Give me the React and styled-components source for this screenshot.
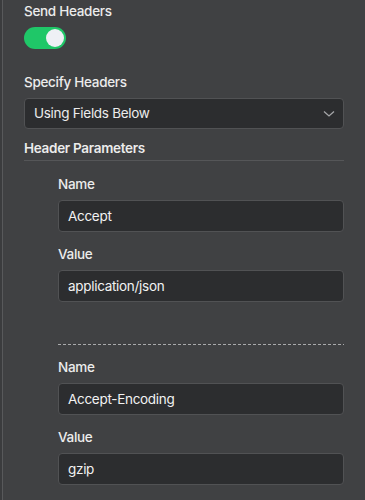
import styled, { createGlobalStyle } from 'styled-components';

const GlobalStyle = createGlobalStyle`
    html, body {
        margin: 0;
        padding: 0;
        background: #3b3c3e;
    }
    * {
        box-sizing: border-box;
    }
`;

const Page = styled.div`
    margin-left: 2px;
    min-height: 500px;
    border-left: 1px solid #58595b;
    background: #404143;
    padding: 3px 21px 0 21px;
    font-family: Inter, "Noto Sans", sans-serif;
    font-size: 13.5px;
    letter-spacing: -0.3px;
    line-height: 17px;
    color: #ececec;
`;

const Label = styled.div`
    font-weight: 500;
    margin-bottom: 7px;
`;

const Section = styled.div`
    margin-bottom: ${(p) => p.$gap || 0}px;
`;

const Toggle = styled.div`
    margin-top: 2px;
    width: 42px;
    height: 22px;
    border-radius: 11px;
    background: #1fc768;
    display: flex;
    align-items: center;
    justify-content: flex-end;
    padding: 0 2px;
`;

const Knob = styled.span`
    width: 18px;
    height: 18px;
    border-radius: 50%;
    background: #eef0f5;
`;

const Select = styled.div`
    height: 31px;
    border: 1px solid #515254;
    border-radius: 4px;
    background: #2c2d2f;
    display: flex;
    align-items: center;
    justify-content: space-between;
    padding: 0 8px 0 9px;
`;

const Heading = styled.div`
    font-weight: 600;
    padding-bottom: 3px;
    border-bottom: 1px solid #555658;
`;

const Params = styled.div`
    padding-left: 34px;
    padding-top: 15px;
`;

const Field = styled.div`
    margin-bottom: ${(p) => p.$gap || 0}px;
`;

const Input = styled.div`
    height: 32px;
    border: 1px solid #515254;
    border-radius: 4px;
    background: #2c2d2f;
    display: flex;
    align-items: center;
    padding: 0 9px;
    color: #f2f2f2;
`;

const Divider = styled.div`
    height: 1px;
    background: repeating-linear-gradient(to right, #a9aaac 0 3px, transparent 3px 5px);
    margin: 42px 0 14px;
`;

const Chevron = () => (
    <svg width="12" height="8" viewBox="0 0 12 8">
        <path d="M1 1.5 L6 6 L11 1.5" fill="none" stroke="#a5a6a8" strokeWidth="1.3" />
    </svg>
);

const headers = [
    { name: 'Accept', value: 'application/json' },
    { name: 'Accept-Encoding', value: 'gzip' },
];

export default function App() {
    return (
        <>
            <GlobalStyle />
            <Page>
                <Section $gap={25}>
                    <Label>Send Headers</Label>
                    <Toggle><Knob /></Toggle>
                </Section>
                <Section $gap={11}>
                    <Label>Specify Headers</Label>
                    <Select>
                        <span>Using Fields Below</span>
                        <Chevron />
                    </Select>
                </Section>
                <Heading>Header Parameters</Heading>
                <Params>
                    {headers.map((h, i) => (
                        <div key={h.name}>
                            {i > 0 && <Divider />}
                            <Field $gap={14}>
                                <Label>Name</Label>
                                <Input>{h.name}</Input>
                            </Field>
                            <Field>
                                <Label>Value</Label>
                                <Input>{h.value}</Input>
                            </Field>
                        </div>
                    ))}
                </Params>
            </Page>
        </>
    );
}
